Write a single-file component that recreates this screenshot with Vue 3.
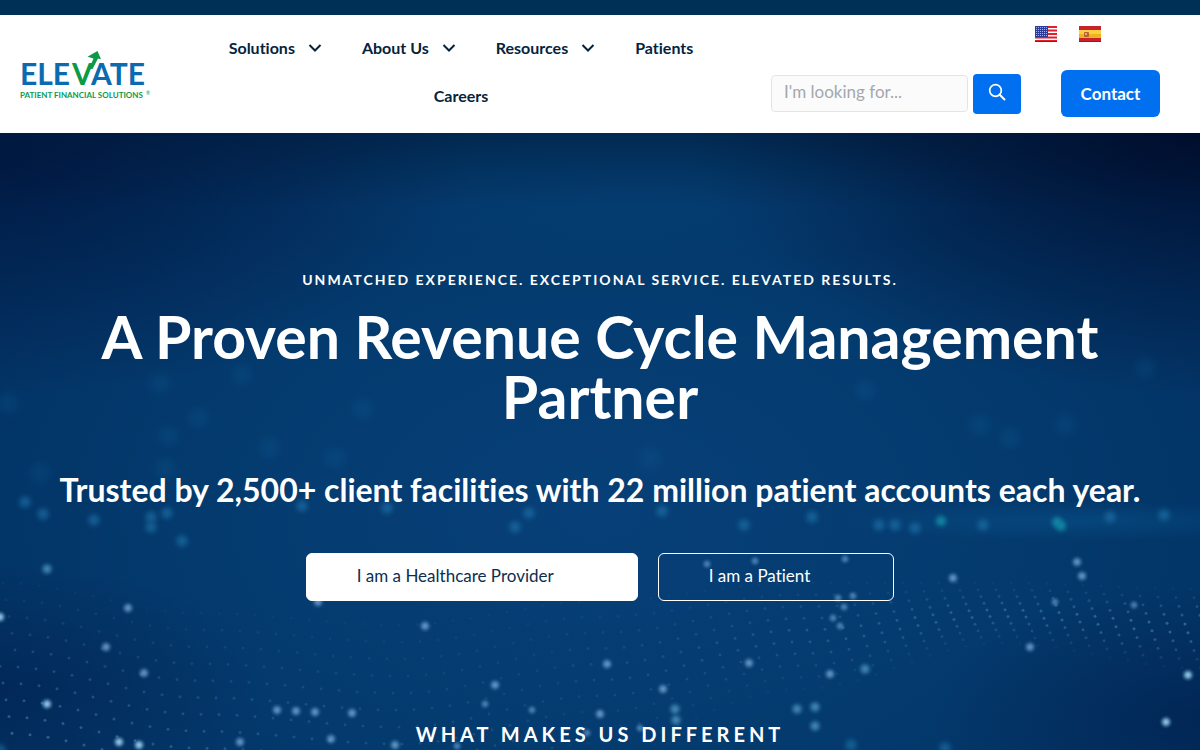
<template>
  <div class="page">
    <div class="top-bar"></div>

    <header class="header">
      <a href="#" class="logo" aria-label="Elevate Patient Financial Solutions">
        <svg viewBox="0 0 131 48" width="131" height="48">
          <g class="logo-name">
            <text x="0" y="34" fill="#0b6bb0">ELE</text>
            <text x="52" y="34" fill="#0b9a48">V</text>
            <text x="71" y="34" fill="#0b6bb0">ATE</text>
          </g>
          <path d="M69 18 L73.500 7.500 L67.500 5.700 L77.500 0 L81 8.300 L78 7.500 L72.500 18 Z" fill="#0b9a48" />
          <text class="logo-tagline" x="0" y="47" fill="#0b9a48">PATIENT FINANCIAL SOLUTIONS</text>
          <text class="logo-mark" x="126" y="44" fill="#0b9a48">®</text>
        </svg>
      </a>

      <nav class="nav">
        <a v-for="item in menu" :key="item.title" href="#" class="nav-link">
          {{ item.title }}
          <svg v-if="item.hasChildren" class="chevron" viewBox="0 0 14 10" width="14" height="10">
            <path d="M1.500 2 L7 7.500 L12.500 2" fill="none" stroke="currentColor" stroke-width="2" />
          </svg>
        </a>
      </nav>

      <div class="tools">
        <div class="languages">
          <a href="#" aria-label="English">
            <svg viewBox="0 0 22 16" width="22" height="16">
              <rect width="22" height="16" fill="#fff" />
              <rect v-for="n in 5" :key="n" :y="(n - 1) * 3.5" width="22" height="2" fill="#e0202c" />
              <rect width="13" height="11" fill="#2b3a94" />
              <g fill="#b9c2ea">
                <template v-for="row in 5" :key="row">
                  <circle v-for="col in 6" :key="col" :cx="col * 2 - 0.5" :cy="row * 2 - 0.5" r="0.600" />
                </template>
              </g>
              <rect y="15" width="22" height="1" fill="#8c1c22" />
            </svg>
          </a>
          <a href="#" aria-label="Español">
            <svg viewBox="0 0 22 16" width="22" height="16">
              <rect width="22" height="16" fill="#c8232c" />
              <rect y="4" width="22" height="8" fill="#f0b51c" />
              <rect y="4" width="22" height="4" fill="#fad048" />
              <rect x="5" y="6" width="5" height="5" rx="1" fill="#b5652a" />
              <rect x="6" y="7" width="2" height="2" fill="#d8a98a" />
              <rect y="15" width="22" height="1" fill="#8c1c22" />
            </svg>
          </a>
        </div>

        <div class="tools-row">
          <form class="search" @submit.prevent>
            <input v-model="query" type="search" class="search-input" placeholder="I'm looking for..." aria-label="Search" />
            <button type="submit" class="search-btn" aria-label="Search">
              <svg viewBox="0 0 18 18" width="18" height="18">
                <circle cx="7.500" cy="7.500" r="5.800" fill="none" stroke="#fff" stroke-width="1.700" />
                <path d="M11.700 11.700 L16.500 16.500" stroke="#fff" stroke-width="2" stroke-linecap="round" />
              </svg>
            </button>
          </form>
          <a href="#" class="contact-btn">Contact</a>
        </div>
      </div>
    </header>

    <main class="hero">
      <svg class="hero-bg" viewBox="0 0 1200 617" preserveAspectRatio="xMidYMin slice" aria-hidden="true">
        <defs>
          <radialGradient v-for="group in sparks" :id="group.id" :key="group.id">
            <stop offset="0" :stop-color="group.color" />
            <stop offset="0.350" :stop-color="group.color" stop-opacity="0.700" />
            <stop offset="0.700" :stop-color="group.color" stop-opacity="0.200" />
            <stop offset="1" :stop-color="group.color" stop-opacity="0" />
          </radialGradient>
          <radialGradient id="haze">
            <stop offset="0" stop-color="#0a5a94" stop-opacity="0.400" />
            <stop offset="1" stop-color="#0a5a94" stop-opacity="0" />
          </radialGradient>
        </defs>
        <ellipse cx="640" cy="60" rx="360" ry="70" fill="url(#haze)" opacity="0.35" />
        <ellipse cx="1080" cy="388" rx="240" ry="20" fill="url(#haze)" />
        <circle v-for="(dot, i) in waveDots" :key="'w' + i" :cx="dot.x" :cy="dot.y" :r="dot.r" fill="#6fa3cf" :opacity="dot.opacity" />
        <g v-for="group in sparks" :key="group.id" :opacity="group.opacity">
          <circle v-for="([x, y], i) in group.points" :key="i" :cx="x" :cy="y" :r="group.r" :fill="`url(#${group.id})`" />
        </g>
      </svg>

      <div class="hero-content">
        <p class="eyebrow">Unmatched Experience. Exceptional Service. Elevated Results.</p>
        <h1 class="title">A Proven Revenue Cycle Management Partner</h1>
        <p class="subtitle">Trusted by 2,500+ client facilities with 22 million patient accounts each year.</p>
        <div class="actions">
          <a href="#" class="action action-solid">I am a Healthcare Provider</a>
          <a href="#" class="action action-outline">I am a Patient</a>
        </div>
        <h2 class="section-title">What Makes Us Different</h2>
      </div>
    </main>
  </div>
</template>

<script setup>
import { ref } from 'vue';

const query = ref('');

const menu = [
  { title: 'Solutions', hasChildren: true },
  { title: 'About Us', hasChildren: true },
  { title: 'Resources', hasChildren: true },
  { title: 'Patients', hasChildren: false },
  { title: 'Careers', hasChildren: false }
];

// blurred light points, grouped by colour
const sparks = [
  {
    id: 'spark-bright', color: '#9bd2f5', r: 7, opacity: 0.95,
    points: [[0, 484], [47, 571], [119, 609], [139, 612], [1188, 542], [1166, 589]]
  },
  {
    id: 'spark-blue', color: '#78acdc', r: 7, opacity: 0.8,
    points: [
      [128, 475], [106, 514], [144, 540], [240, 609], [277, 577], [296, 578], [315, 579], [352, 580],
      [331, 606], [395, 612], [318, 469], [953, 445], [1077, 429], [1082, 443], [1030, 514],
      [830, 541], [749, 530], [495, 552], [600, 581], [663, 556], [607, 531], [425, 493]
    ]
  },
  {
    id: 'spark-small', color: '#78acdc', r: 6, opacity: 0.6,
    points: [
      [838, 465], [853, 463], [844, 474], [833, 485], [840, 493], [1055, 469], [1134, 472],
      [707, 431], [755, 428], [845, 426], [485, 571], [532, 577], [457, 613], [587, 600], [640, 595]
    ]
  },
  {
    id: 'spark-cyan', color: '#5aa5cf', r: 8, opacity: 0.7,
    points: [[47, 436], [675, 576], [676, 587], [797, 576], [815, 574], [815, 593], [865, 536]]
  },
  {
    id: 'spark-teal', color: '#16a0b4', r: 9, opacity: 0.7,
    points: [[941, 388], [1057, 389], [1061, 393]]
  },
  {
    id: 'spark-faint', color: '#2582ba', r: 10, opacity: 0.5,
    points: [
      [94, 387], [43, 381], [25, 369], [151, 384], [151, 394], [167, 380], [182, 408], [302, 373], [387, 375],
      [529, 380], [515, 394], [744, 392], [662, 378], [812, 384], [879, 392], [895, 392], [915, 395],
      [983, 392], [1110, 384], [1164, 382], [851, 612], [945, 615], [0, 617]
    ]
  },
  {
    id: 'spark-far', color: '#1668a2', r: 18, opacity: 0.2,
    points: [
      [242, 242], [160, 250], [198, 285], [363, 276], [8, 270], [168, 303], [335, 325], [40, 340],
      [165, 335], [270, 315], [980, 292], [1010, 305], [1065, 292], [865, 257], [1145, 235], [650, 325]
    ]
  }
];

// upper and lower edge of the dotted wave, one value per 200 units
const upperEdge = [450, 480, 492, 468, 450, 450, 456];
const lowerEdge = [600, 632, 645, 610, 556, 510, 535];

const edgeAt = (edge, x) => {
  const pos = Math.min(x / 200, edge.length - 1.001);
  const i = Math.floor(pos);
  const t = (1 - Math.cos((pos - i) * Math.PI)) / 2;
  return edge[i] + (edge[i + 1] - edge[i]) * t;
};

const waveDots = [];
const rows = 9;
for (let row = 0; row <= rows; row++) {
  for (let col = 0; col < 70; col++) {
    const x = col * 18 + row * 3 - 15;
    if (x < 0 || x > 1200) continue;
    const top = edgeAt(upperEdge, x);
    const bottom = edgeAt(lowerEdge, x);
    const side = Math.abs(x - 560) / 640;
    const fade = x < 560 ? row / rows : 1 - Math.abs(row / rows - 0.5) * 2;
    waveDots.push({
      x,
      y: top + (bottom - top) * (row / rows),
      r: 1.5,
      opacity: (0.06 + 0.42 * fade * (0.2 + side * 0.8)).toFixed(2)
    });
  }
}
</script>

<style>
body {
  margin: 0;
}
</style>

<style scoped>
.page {
  min-height: 100vh;
  display: flex;
  flex-direction: column;
  background: #fff;
  font-family: Lato, "Open Sans", sans-serif;
  font-variant-ligatures: none;
}

.page a {
  text-decoration: none;
}

.top-bar {
  height: 15px;
  background: #003055;
}

.header {
  display: grid;
  grid-template-columns: 131px 1fr 389px;
  column-gap: 50px;
  align-items: center;
  min-height: 118px;
  padding: 0 40px 0 20px;
  box-sizing: border-box;
}

.logo {
  padding-top: 2px;
}

.logo svg {
  display: block;
}

.logo-name {
  font-size: 30px;
  font-weight: 700;
}

.logo-tagline {
  font-size: 8px;
  font-weight: 700;
}

.logo-mark {
  font-size: 5px;
}

.nav {
  display: flex;
  flex-wrap: wrap;
  justify-content: center;
  column-gap: 40px;
  padding-bottom: 4px;
}

.nav-link {
  display: flex;
  align-items: center;
  gap: 13px;
  color: #05233d;
  font-size: 16px;
  font-weight: 700;
  line-height: 48px;
}

.tools {
  display: flex;
  flex-direction: column;
  gap: 28px;
  padding-bottom: 5px;
}

.languages {
  display: flex;
  justify-content: flex-end;
  gap: 22px;
  padding-right: 59px;
}

.languages svg {
  display: block;
}

.tools-row {
  display: flex;
  align-items: center;
  gap: 40px;
}

.search {
  flex: 1;
  min-width: 0;
  display: flex;
  align-items: center;
  gap: 5px;
}

.search-input {
  flex: 1;
  min-width: 0;
  height: 37px;
  padding: 0 12px 4px;
  box-sizing: border-box;
  border: 1px solid #e2e5e8;
  border-radius: 4px;
  background: #fbfbfb;
  color: #333;
  font-family: inherit;
  font-size: 17px;
  outline: none;
}

.search-input::placeholder {
  color: #a3a8ac;
}

.search-btn {
  display: flex;
  align-items: center;
  justify-content: center;
  width: 48px;
  height: 40px;
  padding: 0 0 4px;
  border: none;
  border-radius: 4px;
  background: #0170f0;
  cursor: pointer;
}

.contact-btn {
  flex-shrink: 0;
  width: 99px;
  border-radius: 6px;
  background: #0170f0;
  color: #fff;
  font-size: 17px;
  font-weight: 700;
  line-height: 47px;
  text-align: center;
}

.hero {
  position: relative;
  flex: 1;
  overflow: hidden;
  background:
    radial-gradient(ellipse at 0 5%, rgba(0, 14, 52, 0.6), transparent 28%),
    radial-gradient(ellipse at 100% 0, rgba(0, 8, 38, 0.8), transparent 30%),
    radial-gradient(ellipse at 0 90%, rgba(0, 20, 62, 0.35), transparent 16%),
    radial-gradient(ellipse at 100% 95%, rgba(0, 20, 62, 0.4), transparent 16%),
    linear-gradient(rgba(0, 32, 64, 0.6), transparent 12%),
    radial-gradient(ellipse at 50% 62%, #074078, #043b6f 45%, #023365 80%, #002d5e);
}

.hero-bg {
  position: absolute;
  inset: 0;
  width: 100%;
  height: 100%;
}

.hero-content {
  position: relative;
  padding: 137px 40px 4px;
  color: #fff;
  text-align: center;
}

.eyebrow {
  margin: 0 0 17px;
  font-size: 14px;
  font-weight: 700;
  line-height: 20px;
  letter-spacing: 2px;
  text-transform: uppercase;
}

.title {
  margin: 0 0 43px;
  font-size: 59px;
  font-weight: 700;
  line-height: 60px;
}

.subtitle {
  margin: 0 0 43px;
  font-size: 32px;
  font-weight: 700;
  line-height: 40px;
}

.actions {
  display: flex;
  justify-content: center;
  gap: 20px;
  margin-bottom: 121px;
}

.action {
  padding: 0 83px 2px 50px;
  border: 1px solid #fff;
  border-radius: 6px;
  font-size: 17px;
  line-height: 44px;
}

.action-solid {
  background: #fff;
  color: #0b2e52;
}

.action-outline {
  color: #fff;
}

.section-title {
  margin: 0;
  font-size: 20px;
  font-weight: 700;
  line-height: 24px;
  letter-spacing: 4px;
  text-transform: uppercase;
}
</style>
